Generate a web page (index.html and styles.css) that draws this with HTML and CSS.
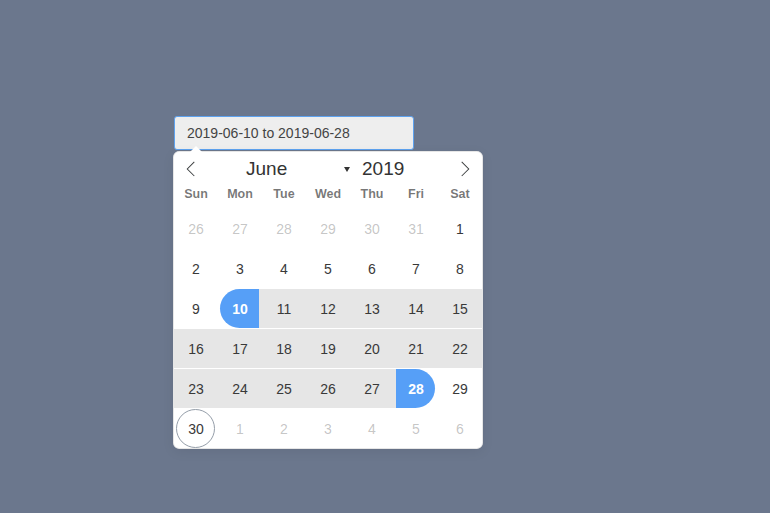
FILE: index.html
```html
<!DOCTYPE html>
<html lang="en">
<head>
<meta charset="utf-8">
<title>Date range picker</title>
<link rel="stylesheet" href="styles.css">
</head>
<body>
<div class="page">
  <div class="picker">
    <div class="date-input">2019-06-10 to 2019-06-28</div>
    <div class="calendar">
      <span class="arrow"></span>
      <div class="months">
        <span class="nav">
          <svg width="16" height="16" viewBox="0 0 17 17"><path d="M5.207 8.471l7.146 7.147-0.707 0.707-7.853-7.854 7.854-7.853 0.707 0.707-7.147 7.146z"/></svg>
        </span>
        <div class="current">
          <span class="month-name">June</span>
          <svg class="caret" width="6" height="5" viewBox="0 0 6 5"><path d="M0 0H6L3 5Z"/></svg>
          <span class="year">2019</span>
        </div>
        <span class="nav">
          <svg width="16" height="16" viewBox="0 0 17 17"><path d="M13.207 8.472l-7.854 7.854-0.707-0.707 7.146-7.146-7.146-7.148 0.707-0.707 7.854 7.854z"/></svg>
        </span>
      </div>
      <div class="weekdays">
        <span>Sun</span><span>Mon</span><span>Tue</span><span>Wed</span><span>Thu</span><span>Fri</span><span>Sat</span>
      </div>
      <div class="days">
        <div class="cell"><span class="day muted">26</span></div>
        <div class="cell"><span class="day muted">27</span></div>
        <div class="cell"><span class="day muted">28</span></div>
        <div class="cell"><span class="day muted">29</span></div>
        <div class="cell"><span class="day muted">30</span></div>
        <div class="cell"><span class="day muted">31</span></div>
        <div class="cell"><span class="day">1</span></div>

        <div class="cell"><span class="day">2</span></div>
        <div class="cell"><span class="day">3</span></div>
        <div class="cell"><span class="day">4</span></div>
        <div class="cell"><span class="day">5</span></div>
        <div class="cell"><span class="day">6</span></div>
        <div class="cell"><span class="day">7</span></div>
        <div class="cell"><span class="day">8</span></div>

        <div class="cell"><span class="day">9</span></div>
        <div class="cell start"><span class="day">10</span></div>
        <div class="cell in-range"><span class="day">11</span></div>
        <div class="cell in-range"><span class="day">12</span></div>
        <div class="cell in-range"><span class="day">13</span></div>
        <div class="cell in-range"><span class="day">14</span></div>
        <div class="cell in-range"><span class="day">15</span></div>

        <div class="cell in-range"><span class="day">16</span></div>
        <div class="cell in-range"><span class="day">17</span></div>
        <div class="cell in-range"><span class="day">18</span></div>
        <div class="cell in-range"><span class="day">19</span></div>
        <div class="cell in-range"><span class="day">20</span></div>
        <div class="cell in-range"><span class="day">21</span></div>
        <div class="cell in-range"><span class="day">22</span></div>

        <div class="cell in-range"><span class="day">23</span></div>
        <div class="cell in-range"><span class="day">24</span></div>
        <div class="cell in-range"><span class="day">25</span></div>
        <div class="cell in-range"><span class="day">26</span></div>
        <div class="cell in-range"><span class="day">27</span></div>
        <div class="cell end"><span class="day">28</span></div>
        <div class="cell"><span class="day">29</span></div>

        <div class="cell today"><span class="day">30</span></div>
        <div class="cell"><span class="day muted">1</span></div>
        <div class="cell"><span class="day muted">2</span></div>
        <div class="cell"><span class="day muted">3</span></div>
        <div class="cell"><span class="day muted">4</span></div>
        <div class="cell"><span class="day muted">5</span></div>
        <div class="cell"><span class="day muted">6</span></div>
      </div>
    </div>
  </div>
</div>
</body>
</html>
```
FILE: styles.css
```css
html, body {
  margin: 0;
  height: 100%;
}
body {
  background: #6b778d;
  font-family: "Liberation Sans", Arial, sans-serif;
}
.page {
  padding: 116px 0 0 174px;
}
.picker {
  width: 308px;
}
.date-input {
  width: 240px;
  height: 34px;
  box-sizing: border-box;
  border: 1px solid #5ea2ef;
  border-radius: 3px;
  background: #eeeeee;
  color: #444;
  font-size: 14px;
  padding-left: 12px;
  display: flex;
  align-items: center;
}
.calendar {
  position: relative;
  margin-top: 2px;
  width: 308px;
  background: #fff;
  border-radius: 5px;
  box-shadow: 1px 0 0 #e6e6e6, -1px 0 0 #e6e6e6, 0 1px 0 #e6e6e6, 0 -1px 0 #e6e6e6, 0 3px 13px rgba(0, 0, 0, 0.08);
}
.arrow {
  position: absolute;
  top: -6px;
  left: 16px;
  width: 0;
  height: 0;
  border-style: solid;
  border-width: 0 6px 6px 6px;
  border-color: transparent transparent #fff transparent;
}
.months {
  display: flex;
  align-items: center;
  height: 34px;
}
.nav {
  width: 34px;
  height: 34px;
  display: flex;
  align-items: center;
  justify-content: center;
}
.nav svg {
  fill: #3c3f40;
}
.current {
  flex: 1;
  display: flex;
  align-items: center;
  font-size: 19px;
  color: #333;
}
.month-name {
  margin-left: 38px;
  width: 98px;
}
.caret {
  fill: #333;
}
.year {
  margin-left: 12px;
}
.weekdays {
  display: grid;
  grid-template-columns: repeat(7, 44px);
  height: 14px;
  line-height: 14px;
  margin-top: 1px;
  margin-bottom: 8px;
  font-size: 12.5px;
  font-weight: bold;
  color: rgba(0, 0, 0, 0.54);
  text-align: center;
}
.days {
  display: grid;
  grid-template-columns: repeat(7, 44px);
  grid-auto-rows: 39px;
  row-gap: 1px;
}
.cell {
  display: flex;
  justify-content: flex-start;
  padding-left: 2px;
}
.day {
  width: 39px;
  height: 39px;
  line-height: 40px;
  padding-left: 1px;
  box-sizing: border-box;
  text-align: center;
  font-size: 14px;
  color: #393939;
  border-radius: 50%;
}
.day.muted {
  color: rgba(57, 57, 57, 0.3);
}
.in-range {
  background: #e6e6e6;
}
.start {
  background: linear-gradient(90deg, transparent 50%, #e6e6e6 50%);
}
.end {
  background: linear-gradient(90deg, #e6e6e6 50%, transparent 50%);
}
.start .day,
.end .day {
  background: #569ff7;
  color: #fff;
  font-weight: bold;
}
.start .day {
  border-radius: 50px 0 0 50px;
}
.end .day {
  border-radius: 0 50px 50px 0;
}
.today .day {
  border: 1px solid #959ea9;
  line-height: 38px;
}
```
